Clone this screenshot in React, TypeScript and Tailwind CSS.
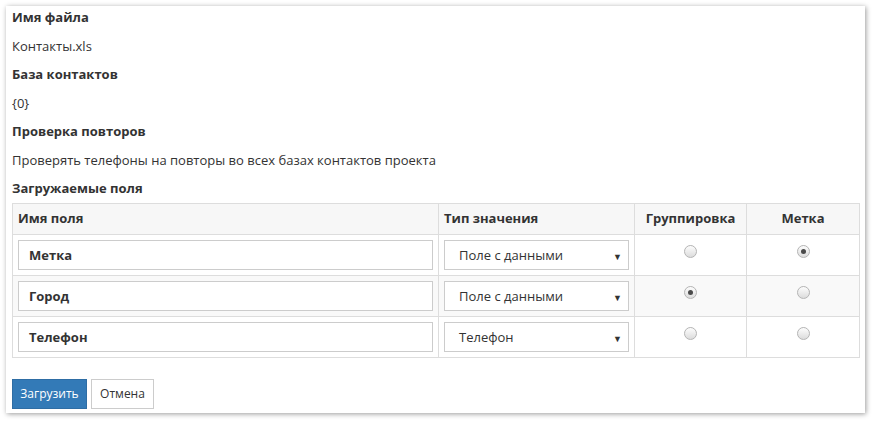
import React from "react";

const rows = [
  { name: "Метка", type: "Поле с данными", group: false, mark: true },
  { name: "Город", type: "Поле с данными", group: true, mark: false },
  { name: "Телефон", type: "Телефон", group: false, mark: false },
];

function Radio({ checked }: { checked: boolean }) {
  return (
    <span className="inline-flex h-[13px] w-[13px] items-center justify-center rounded-full border border-[#b5b5b5] bg-gradient-to-b from-[#fdfdfd] to-[#dcdcdc]">
      {checked && <span className="h-[5px] w-[5px] rounded-full bg-[#4a4a4a]" />}
    </span>
  );
}

export default function App() {
  return (
    <div className="h-[421px] w-[872px] bg-white pl-[6px] pt-[6px] font-['Open_Sans',sans-serif] text-[13px] text-[#333]">
      <div className="h-[407px] w-[859px] bg-white pl-[6px] pt-[2px] shadow-[1px_1px_5px_rgba(0,0,0,0.4)]">
        <div className="mb-[10.5px] font-bold leading-[18px]">Имя файла</div>
        <div className="mb-[10.5px] leading-[18px]">Контакты.xls</div>
        <div className="mb-[10.5px] font-bold leading-[18px]">База контактов</div>
        <div className="mb-[10.5px] leading-[18px]">{"{0}"}</div>
        <div className="mb-[10.5px] font-bold leading-[18px]">Проверка повторов</div>
        <div className="mb-[10.5px] leading-[18px]">
          Проверять телефоны на повторы во всех базах контактов проекта
        </div>
        <div className="mb-[6px] font-bold leading-[18px]">Загружаемые поля</div>

        <table className="w-[847px] table-fixed border-collapse">
          <colgroup>
            <col className="w-[426px]" />
            <col className="w-[196px]" />
            <col className="w-[112px]" />
            <col className="w-[113px]" />
          </colgroup>
          <thead>
            <tr className="h-[31px] bg-[#f7f7f7]">
              <th className="border border-[#dddddd] px-[5px] text-left font-bold">Имя поля</th>
              <th className="border border-[#dddddd] px-[5px] text-left font-bold">Тип значения</th>
              <th className="border border-[#dddddd] px-[5px] text-center font-bold">Группировка</th>
              <th className="border border-[#dddddd] px-[5px] text-center font-bold">Метка</th>
            </tr>
          </thead>
          <tbody>
            {rows.map((r, i) => (
              <tr key={r.name} className={i === 1 ? "bg-[#f9f9f9]" : "bg-white"}>
                <td className="border border-[#dddddd] p-[5px]">
                  <div className="flex h-[30px] items-center border border-[#cccccc] bg-white pl-[10px] pt-[2px] font-bold">
                    {r.name}
                  </div>
                </td>
                <td className="border border-[#dddddd] p-[5px]">
                  <div className="flex h-[30px] w-[185px] items-center justify-between border border-[#cccccc] bg-white pl-[14px] pr-[6px] pt-[2px]">
                    <span>{r.type}</span>
                    <span className="text-[9px] leading-none text-[#333]">▼</span>
                  </div>
                </td>
                <td className="border border-[#dddddd] px-[5px] pt-[10px] align-top">
                  <div className="flex justify-center">
                    <Radio checked={r.group} />
                  </div>
                </td>
                <td className="border border-[#dddddd] px-[5px] pt-[10px] align-top">
                  <div className="flex justify-center">
                    <Radio checked={r.mark} />
                  </div>
                </td>
              </tr>
            ))}
          </tbody>
        </table>

        <div className="mt-[21px] flex gap-[4px] text-[12px]">
          <button className="h-[30px] w-[75px] border border-[#2e6da4] bg-[#337ab7] text-white">
            Загрузить
          </button>
          <button className="h-[30px] w-[63px] border border-[#cccccc] bg-white text-[#333]">
            Отмена
          </button>
        </div>
      </div>
    </div>
  );
}
